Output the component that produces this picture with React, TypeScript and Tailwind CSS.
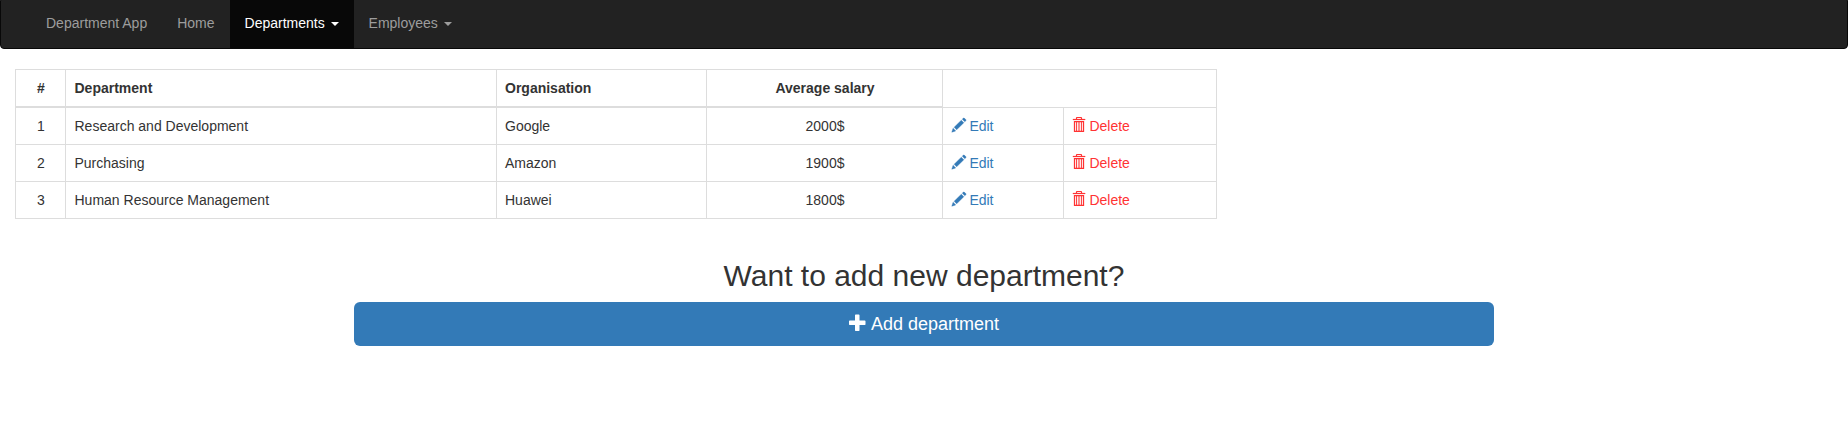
import React from "react";

const departments = [
  { id: 1, name: "Research and Development", organisation: "Google", salary: "2000$" },
  { id: 2, name: "Purchasing", organisation: "Amazon", salary: "1900$" },
  { id: 3, name: "Human Resource Management", organisation: "Huawei", salary: "1800$" },
];

function Caret() {
  return (
    <span className="ml-[2px] inline-block h-0 w-0 border-x-4 border-t-4 border-x-transparent border-t-current align-middle" />
  );
}

function PencilIcon() {
  return (
    <svg viewBox="0 0 1200 1200" className="relative top-px inline-block h-[14px] w-[14px] overflow-visible align-baseline" fill="currentColor" stroke="currentColor" strokeWidth="35" aria-hidden="true">
      <path
        transform="translate(0 1200) scale(1 -1)"
        d="M1011 1210q19 0 33 -13l153 -153q13 -14 13 -33t-13 -33l-99 -92l-214 214l95 96q13 14 32 14zM1013 800l-615 -614l-214 214l614 614zM317 96l-333 -112l110 335z"
      />
    </svg>
  );
}

function TrashIcon() {
  return (
    <svg viewBox="0 0 14 16" className="relative top-px -mt-1 inline-block h-[16px] w-[14px] align-baseline" fill="none" stroke="currentColor" aria-hidden="true">
      <path d="M0.8 3.5H13.3" strokeWidth="1.2" />
      <path d="M4.5 3V1.9Q4.5 1.5 5 1.5H9Q9.5 1.5 9.5 1.9V3" strokeWidth="1.2" />
      <path d="M2.5 5.5V15.4H11.5V5.5Z" strokeWidth="1.25" />
      <path d="M4.6 5.5V15M9.4 5.5V15" strokeWidth="1" />
      <path d="M7 5.5V15" strokeWidth="1.1" />
    </svg>
  );
}

function PlusIcon() {
  return (
    <svg viewBox="0 0 1200 1200" className="relative top-px inline-block h-[18px] w-[18px] overflow-visible align-baseline" fill="currentColor" aria-hidden="true">
      <path
        transform="translate(0 1200) scale(1 -1)"
        d="M450 1100h200q21 0 35.5 -14.5t14.5 -35.5v-350h350q21 0 35.5 -14.5t14.5 -35.5v-200q0 -21 -14.5 -35.5t-35.5 -14.5h-350v-350q0 -21 -14.5 -35.5t-35.5 -14.5h-200q-21 0 -35.5 14.5t-14.5 35.5v350h-350q-21 0 -35.5 14.5t-14.5 35.5v200q0 21 14.5 35.5t35.5 14.5h350v350q0 21 14.5 35.5t35.5 14.5z"
      />
    </svg>
  );
}

const headCell = "border border-b-2 border-[#ddd] py-2 font-bold";
const cell = "border border-[#ddd] py-2";
const inset = "pl-[8.5px] pr-[7.5px]";

export default function App() {
  return (
    <div className="bg-white font-['Liberation_Sans',Arial,sans-serif] text-[14px] leading-[20px] text-[#333]">
      <nav className="-mt-[3px] mb-5 flex h-[52px] rounded-[4px] border border-[#080808] bg-[#222] pl-[30px] text-[#9d9d9d]">
        <a className="p-[15px]">Department App</a>
        <a className="p-[15px]">Home</a>
        <a className="bg-[#080808] p-[15px] text-white">
          Departments <Caret />
        </a>
        <a className="p-[15px]">
          Employees <Caret />
        </a>
      </nav>

      <main>
        <table className="ml-[15px] w-[1202px] table-fixed border-collapse border border-[#ddd] text-left">
          <colgroup>
            <col className="w-[50px]" />
            <col className="w-[431px]" />
            <col className="w-[210px]" />
            <col className="w-[236px]" />
            <col className="w-[121px]" />
            <col className="w-[153px]" />
          </colgroup>
          <thead>
            <tr>
              <th className={`${headCell} ${inset} text-center`}>#</th>
              <th className={`${headCell} ${inset}`}>Department</th>
              <th className={`${headCell} px-2`}>Organisation</th>
              <th className={`${headCell} ${inset} text-center`}>Average salary</th>
              <td className={cell} colSpan={2} />
            </tr>
          </thead>
          <tbody>
            {departments.map((d) => (
              <tr key={d.id} className="h-[37px]">
                <td className={`${cell} ${inset} text-center`}>{d.id}</td>
                <td className={`${cell} ${inset}`}>{d.name}</td>
                <td className={`${cell} px-2`}>{d.organisation}</td>
                <td className={`${cell} ${inset} text-center`}>{d.salary}</td>
                <td className={`${cell} ${inset}`}>
                  <a className="text-[#337ab7]">
                    <PencilIcon /> Edit
                  </a>
                </td>
                <td className={`${cell} pl-[7.5px]`}>
                  <a className="text-[#ff3333]">
                    <TrashIcon /> Delete
                  </a>
                </td>
              </tr>
            ))}
          </tbody>
        </table>

        <section className="mx-auto mt-10 w-[1140px] text-center">
          <h2 className="mb-[10px] text-[30px] leading-[33px] font-medium">Want to add new department?</h2>
          <button className="block h-[44px] w-full rounded-[6px] bg-[#337ab7] px-4 py-[10px] text-[18px] leading-[24px] text-white">
            <PlusIcon /> Add department
          </button>
        </section>
      </main>
    </div>
  );
}
